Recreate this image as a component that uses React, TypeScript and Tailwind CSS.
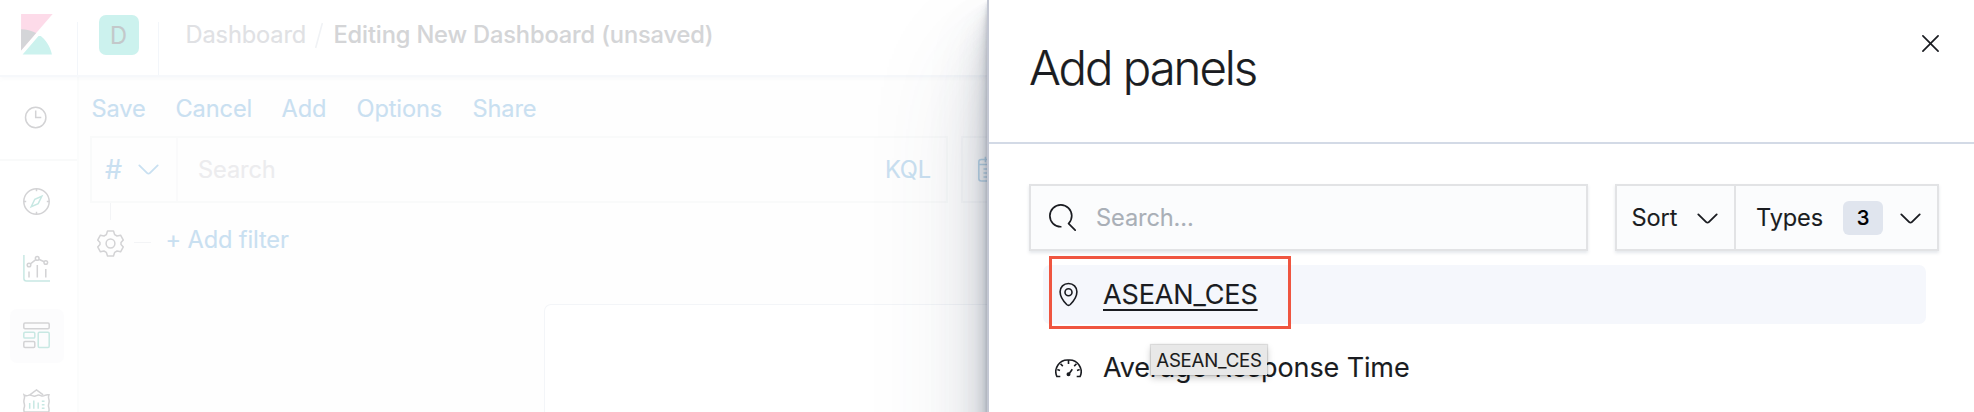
import type { ReactNode } from 'react';

const GRAY = '#d3d3d5';
const TEAL = '#c8e8e3';

function ChevronDown({ className }: { className: string }) {
  return (
    <svg viewBox="0 0 16 16" className={`h-[27px] w-[27px] shrink-0 ${className}`} fill="currentColor">
      <path d="M13.069 5.157L8.384 9.768a.546.546 0 0 1-.768 0L2.93 5.158a.552.552 0 0 0-.771 0 .53.53 0 0 0 0 .759l4.684 4.61c.641.631 1.672.63 2.312 0l4.684-4.61a.53.53 0 0 0 0-.76.552.552 0 0 0-.771 0z" />
    </svg>
  );
}

function KibanaLogo() {
  return (
    <svg viewBox="0 0 32 32" className="h-[40.5px] w-[40.5px]">
      <path fill="#fddbe9" d="M4 0v28.789L28.935.017z" />
      <path fill="#d4d5d8" d="M4 12v16.789l11.906-13.738A24.721 24.721 0 0 0 4 12" />
      <path fill="#ccf2ee" d="M18.479 16.664L6.268 30.754l-1.073 1.237h23.191c-1.252-6.292-4.883-11.719-9.908-15.327" />
    </svg>
  );
}

function ClockIcon() {
  return (
    <svg viewBox="0 0 27 27" className="h-[27px] w-[27px] -translate-x-[0.8px]" fill="none" stroke={GRAY} strokeWidth="1.5">
      <circle cx="13.5" cy="13.5" r="10.2" />
      <path d="M13.5 6.4v7.2h5.6" />
    </svg>
  );
}

function CompassIcon() {
  return (
    <svg viewBox="0 0 27 27" className="h-[27px] w-[27px]" fill="none" stroke={GRAY} strokeWidth="1.5">
      <circle cx="13.5" cy="13.5" r="12.7" />
      <path d="M13.5 1v2.2M13.5 23.8V26M1 13.5h2.2M23.8 13.5H26" />
      <path stroke={TEAL} d="M18.8 8.2l-7 3.1-3.6 7.5 7-3.2z" />
    </svg>
  );
}

function VisualizeIcon() {
  return (
    <svg viewBox="0 0 27 27" className="h-[27px] w-[27px]" fill="none" stroke={GRAY} strokeWidth="1.5">
      <path stroke={TEAL} d="M.9 0v23.6q0 2.5 2.5 2.5H27" />
      <circle cx="6" cy="10" r="1.8" />
      <circle cx="14.2" cy="3.4" r="1.8" />
      <circle cx="22.8" cy="7.5" r="1.8" />
      <path d="M7.4 8.8l5.4-4.2M15.8 4.2l5.4 2.5M6 16.6v6M14.3 10v12.6M22.8 14v8.6" />
    </svg>
  );
}

function DashboardIcon() {
  return (
    <svg viewBox="0 0 27 27" className="h-[27px] w-[27px]" fill="none" stroke={GRAY} strokeWidth="1.5">
      <rect x=".8" y="1" width="25.4" height="5.8" rx="1.2" />
      <rect x=".8" y="19.6" width="11" height="5.8" rx="1.2" />
      <rect stroke={TEAL} x=".8" y="10.3" width="11" height="5.8" rx="1.2" />
      <rect stroke={TEAL} x="15.2" y="10.3" width="11" height="15.1" rx="1.2" />
    </svg>
  );
}

function CanvasIcon() {
  return (
    <svg viewBox="0 0 27 27" className="h-[27px] w-[27px]" fill="none" stroke={GRAY} strokeWidth="1.5">
      <path d="M6.8 5.8L13.5.9l6.7 4.9" />
      <path d="M1 5.8q2.2 1.4 4.2.6 2-1 4.1.3 2.1 1.2 4.2 0 2.1-1.2 4.2-.1 2.1 1.1 4.1-.2 2-1 4.2-.6-.9 2.2-.2 4.3.7 2.1 0 4.3-.7 2.1 0 4.2.6 2.2-.1 4.4H1.2q-.7-2.2 0-4.4.7-2.1 0-4.2-.7-2.2 0-4.3T1 5.8z" />
      <path stroke={TEAL} d="M6.7 14v5.8M10.8 11.5v8.3M15.2 13.5v6.3M18.8 12.2h2.7M18.8 15.7h2.7M18.8 19.2h2.7" />
    </svg>
  );
}

function GearIcon() {
  return (
    <svg viewBox="0 0 27 27" className="h-[27px] w-[27px] shrink-0" fill="none" stroke={GRAY} strokeWidth="1.5" strokeLinejoin="round">
      <circle cx="13.5" cy="13.5" r="4.4" />
      <path d="M10.5 1h6l1.2 3.7 2.3 1.3 3.6-.8 2.7 4.9-2.3 2.5v1.8l2.3 2.5-2.7 4.9-3.6-.8-2.3 1.3-1.2 3.7h-6l-1.2-3.7-2.3-1.3-3.600.8-2.700-4.900L3 14.400v-1.800L.7 10.100l2.700-4.900 3.600.8 2.300-1.300z" />
    </svg>
  );
}

function CalendarIcon() {
  return (
    <svg viewBox="0 0 27 27" className="h-[27px] w-[27px] shrink-0" fill="none" stroke="#bcd9ec" strokeWidth="1.6">
      <rect x="1.8" y="3.5" width="23.4" height="21.5" rx="2.5" />
      <path d="M1.8 8.5h23.4M8.4.8v5.4M18.6.8v5.4M6.5 13h3.6M6.5 17h3.6M6.5 21h3.6M12 13h3.6M12 17h3.6" />
    </svg>
  );
}

function SearchIcon() {
  return (
    <svg viewBox="0 0 16 16" className="h-[27px] w-[27px] shrink-0" fill="currentColor">
      <path d="M11.271 11.978l3.872 3.873a.502.502 0 0 0 .708 0 .502.502 0 0 0 0-.708l-3.565-3.564c2.38-2.747 2.267-6.923-.342-9.532-2.73-2.73-7.17-2.73-9.898 0-2.728 2.729-2.728 7.17 0 9.9a6.955 6.955 0 0 0 4.949 2.05.5.5 0 0 0 0-1 5.96 5.96 0 0 1-4.242-1.757 6.01 6.01 0 0 1 0-8.486 6.004 6.004 0 0 1 8.484 0 6.01 6.01 0 0 1 0 8.486.5.5 0 0 0 .034.738z" />
    </svg>
  );
}

function CloseIcon() {
  return (
    <svg viewBox="0 0 16 16" className="h-[27px] w-[27px]" fill="currentColor">
      <path d="M7.293 8L3.146 3.854a.5.5 0 1 1 .708-.708L8 7.293l4.146-4.147a.5.5 0 0 1 .708.708L8.707 8l4.147 4.146a.5.5 0 0 1-.708.708L8 8.707l-4.146 4.147a.5.5 0 0 1-.708-.708L7.293 8z" />
    </svg>
  );
}

function PinIcon() {
  return (
    <svg viewBox="0 0 27 27" className="h-[27px] w-[27px] shrink-0" fill="none" stroke="currentColor" strokeWidth="1.6">
      <circle cx="13.5" cy="11.3" r="3.5" />
      <path d="M13.5 2.5c-4.9 0-8.4 3.5-8.4 8.3 0 4.2 3.2 9.3 6.6 12.7q1.8 1.7 3.6 0c3.4-3.4 6.6-8.5 6.6-12.7 0-4.8-3.5-8.3-8.4-8.3z" />
    </svg>
  );
}

function GaugeIcon() {
  return (
    <svg viewBox="0 0 27 27" className="h-[27px] w-[27px] shrink-0" fill="none" stroke="currentColor" strokeWidth="1.6">
      <path d="M5.3 21.5H1.9A11.7 11.7 0 0 1 13.5 5a11.7 11.7 0 0 1 11.6 16.5h-3.4" />
      <path d="M13.5 5v4M5.5 8.8l2.300 2.300M21.500 8.800l-2.300 2.300M2.300 14.500l2.700.9M24.700 14.500l-2.700.9" />
      <path d="M17.3 14.2l-3.2 4.6" />
      <circle cx="13.5" cy="19.2" r="1.2" fill="currentColor" />
    </svg>
  );
}

function NavItem({ children, active = false }: { children: ReactNode; active?: boolean }) {
  return (
    <div className={`flex h-[54px] w-[54px] items-center justify-center rounded-[7px] ${active ? 'bg-[#fcfcfd]' : ''}`}>
      {children}
    </div>
  );
}

function TopBar() {
  return (
    <header className="relative z-[1] flex h-[77px] shrink-0 border-b-2 border-[#f6f8fb] bg-white shadow-[0_2px_4px_rgba(152,162,179,0.06)]">
      <div className="flex w-[77px] shrink-0 pt-[14px] pl-[16.3px]">
        <KibanaLogo />
      </div>
      <div className="mt-[22px] w-px bg-[#f3f6fa]" />
      <div className="flex w-[80px] shrink-0 pt-[15px] pl-[20.5px]">
        <div className="flex h-10 w-10 items-center justify-center rounded-[7px] bg-[#ccf2ee] pt-px text-[#c3c8ca]">D</div>
      </div>
      <div className="mt-[22px] w-px bg-[#f3f6fa]" />
      <nav className="flex h-[70px] items-center pl-[26.5px] whitespace-nowrap">
        <span className="w-[129px] text-[#e0e1e4]">Dashboard</span>
        <svg viewBox="0 0 8 27" className="h-[27px] w-2" stroke="#f0f2f5" strokeWidth="1.6">
          <path d="M7.4 1L.6 26" />
        </svg>
        <span className="pl-[11px] font-medium text-[#d4d5d7]">Editing New Dashboard (unsaved)</span>
      </nav>
    </header>
  );
}

function SideNav() {
  return (
    <aside className="flex w-[79px] shrink-0 flex-col border-r-2 border-[#fbfcfc] bg-white">
      <div className="flex h-[84px] shrink-0 justify-center border-b-2 border-[#f9fafa] pt-[13.5px] pr-[4px]">
        <NavItem><ClockIcon /></NavItem>
      </div>
      <div className="flex flex-col gap-[13px] pt-[13.5px] pl-[9.5px]">
        <NavItem><CompassIcon /></NavItem>
        <NavItem><VisualizeIcon /></NavItem>
        <NavItem active><DashboardIcon /></NavItem>
        <NavItem><CanvasIcon /></NavItem>
      </div>
    </aside>
  );
}

function DashboardPage() {
  return (
    <div className="flex h-[412px] w-[987px] shrink-0 flex-col overflow-hidden bg-white">
      <TopBar />
      <div className="flex min-h-0 flex-1">
        <SideNav />
        <main className="flex min-w-0 flex-1 flex-col bg-[#fefefe] text-[#c9e0f1]">
          <div className="flex h-[59px] shrink-0 items-center pt-[5px] pl-[12.5px] whitespace-nowrap">
            <span className="w-[84px]">Save</span>
            <span className="w-[106px]">Cancel</span>
            <span className="w-[75px]">Add</span>
            <span className="w-[116px]">Options</span>
            <span>Share</span>
          </div>
          <div className="flex h-[67px] shrink-0 gap-[13px] overflow-hidden pl-[11px]">
            <div className="flex w-[858px] shrink-0 items-center border-2 border-[#f9fafa] bg-[#fefefe]">
              <div className="flex h-full w-[86px] shrink-0 items-center border-r-2 border-[#fafafb] pl-[13px]">
                <span className="w-[30px] text-[27px]">#</span>
                <ChevronDown className="" />
              </div>
              <span className="flex-1 pl-[20px] text-[#ececee]">Search</span>
              <span className="pr-[15px]">KQL</span>
            </div>
            <div className="flex w-[200px] shrink-0 items-center border-2 border-[#f8f9fa] pl-[14px]">
              <CalendarIcon />
            </div>
          </div>
          <div className="flex h-[101px] shrink-0 items-start pl-[18px]">
            <div className="flex w-[27px] flex-col items-center">
              <div className="h-[17px] w-px bg-[#f3f4f6]" />
              <div className="pt-[9.5px]"><GearIcon /></div>
            </div>
            <div className="mt-[38.5px] ml-[10px] h-px w-[17px] bg-[#f3f4f6]" />
            <span className="mt-[21px] ml-[14.5px] leading-[32px]">+ Add filter</span>
          </div>
          <div className="ml-[465px] flex-1 rounded-tl-[7px] border-t border-l border-[#f3f5f8] bg-white" />
        </main>
      </div>
    </div>
  );
}

function Flyout() {
  return (
    <section className="relative z-10 flex h-[700px] w-[987px] shrink-0 flex-col border-l-2 border-[#c3c7d3] bg-white text-[#1a1c21] shadow-[0_67px_108px_0_rgba(65,78,101,0.17),0_40px_54px_0_rgba(65,78,101,0.18),0_27px_27px_0_rgba(65,78,101,0.18),0_13px_13px_0_rgba(65,78,101,0.18),0_7px_7px_0_rgba(65,78,101,0.16),0_3px_3px_0_rgba(65,78,101,0.14)]">
      <div className="flex h-[144px] shrink-0 items-start justify-between border-b-2 border-[#d3dae6] pt-[30px] pr-[30.5px] pl-[40px]">
        <h1 className="text-[47.3px] leading-[76px] font-light tracking-[-0.043em] [-webkit-text-stroke:0.2px_currentColor]">Add panels</h1>
        <CloseIcon />
      </div>
      <div className="mt-[40px] flex h-[67px] shrink-0 gap-[27px] pl-[40px]">
        <div className="flex w-[559px] items-center border-2 border-[#e2e3e5] bg-[#fbfcfd] pl-[18px] shadow-[0_2px_3px_rgba(152,162,179,0.25)]">
          <SearchIcon />
          <span className="pl-[20px] text-[#a9afb7]">Search...</span>
        </div>
        <div className="flex w-[324px] border-2 border-[#e2e3e5] bg-[#fbfcfd] shadow-[0_2px_3px_rgba(152,162,179,0.25)]">
          <div className="flex w-[119px] items-center border-r-2 border-[#e2e3e5] pt-px pl-[14.5px]">
            <span className="w-[62px]">Sort</span>
            <ChevronDown className="" />
          </div>
          <div className="flex flex-1 items-center pt-px pl-[20px]">
            <span className="w-[87px]">Types</span>
            <span className="flex h-[34px] w-10 items-center justify-center rounded-[6px] bg-[#e0e5ee] text-[20.3px] font-medium text-black">3</span>
            <ChevronDown className="ml-[13.5px]" />
          </div>
        </div>
      </div>
      <ul className="flex flex-col gap-[14px] pt-[14px] pr-[48.5px] pl-[53.5px] text-[27px] whitespace-nowrap">
        <li className="relative flex h-[59px] items-center rounded-[7px] bg-[#f5f7fc] pl-[12.5px]">
          <PinIcon />
          <span className="ml-[21px] leading-[32px] underline decoration-[2px] underline-offset-[4.5px]">ASEAN_CES</span>
          <div className="absolute -top-[9px] left-[6.5px] h-[73px] w-[242px] border-[3px] border-[#ef5540]" />
        </li>
        <li className="relative flex h-[59px] items-center pt-px pl-[12.5px]">
          <GaugeIcon />
          <span className="pl-[21px]">Average Response Time</span>
          <div className="absolute top-[7px] left-[108.5px] flex h-[30px] w-[116px] items-center justify-center bg-[#e8e8e8] text-[18.6px] tracking-[-0.01em] text-[#1b1b1b] shadow-[0_0_1px_1px_rgba(0,0,0,0.12),0_3px_7px_rgba(0,0,0,0.22)]">
            ASEAN_CES
          </div>
        </li>
      </ul>
    </section>
  );
}

export default function App() {
  return (
    <div className="flex h-[412px] w-[1974px] items-start overflow-hidden bg-white font-['Inter',sans-serif] text-[23.6px] leading-[36px] tracking-[-0.005em] [-webkit-text-stroke:0.1px_currentColor]">
      <DashboardPage />
      <Flyout />
    </div>
  );
}
